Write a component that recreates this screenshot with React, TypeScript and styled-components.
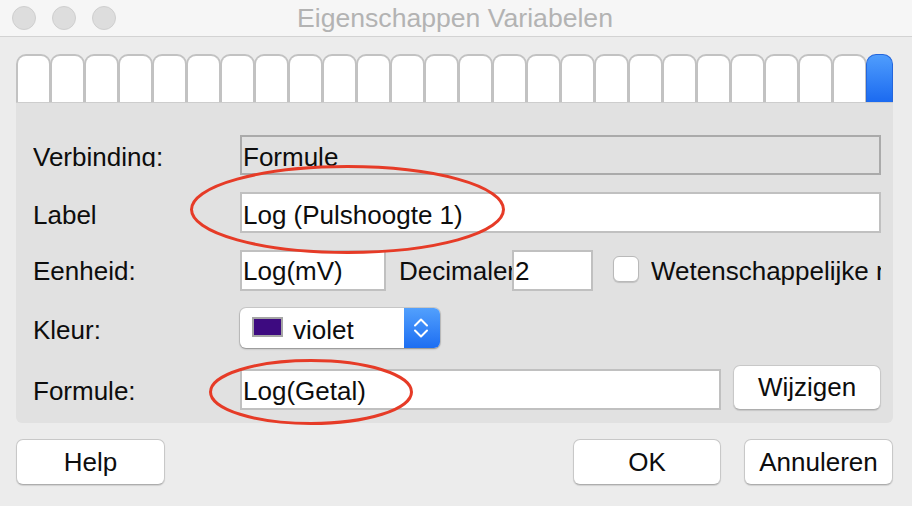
import React from "react";
import styled, { createGlobalStyle } from "styled-components";

const GlobalStyle = createGlobalStyle`
  html, body {
    margin: 0;
    padding: 0;
  }
  body {
    background: #ececec;
    font-family: "Liberation Sans", Arial, Helvetica, sans-serif;
  }
`

const Window = styled.div`
  position: relative;
  width: 912px;
  height: 506px;
  overflow: hidden;
  background: #ececec;
  color: #0d0d0d;
  font-size: 26px;
`

const TitleBar = styled.div`
  display: grid;
  grid-template-columns: 1fr auto 1fr;
  align-items: center;
  height: 36px;
  padding-left: 12px;
  background: #f6f6f6;
  border-bottom: 1px solid #d3d3d3;
`

const Lights = styled.div`
  display: flex;
  gap: 16px;
`

const Light = styled.span`
  width: 24px;
  height: 24px;
  box-sizing: border-box;
  border-radius: 50%;
  background: #dddddd;
  border: 1px solid #cfcfcf;
`

const Title = styled.div`
  font-size: 26.6px;
  line-height: 36px;
  color: #b3b3b3;
  margin-left: -14px;
`

const TabStrip = styled.div`
  display: flex;
  height: 48px;
  margin: 17px 19px 0 16px;
`

const Tab = styled.div<{ $active?: boolean }>`
  box-sizing: border-box;
  flex: none;
  width: ${({$active}) => $active ? "27px" : "35px"};
  margin-right: -1px;
  border-radius: 10px 10px 0 0;
  ${({$active}) => $active ? `
    background: linear-gradient(#4f9dfd, #1b6af0);
    border: 1px solid #2466dc;
    border-bottom: none;
  ` : `
    background: #fff;
    border: 2px solid #c2c2c2;
    border-bottom: none;
  `}
`

const Panel = styled.div`
  display: flex;
  flex-direction: column;
  gap: 17px;
  margin: 0 19px 0 16px;
  padding: 32px 12px 13px 17px;
  background: #e1e1e1;
  border-top: 1px solid #cdcdcd;
  border-radius: 0 0 6px 6px;
`

const Row = styled.div<{ $h: number; $pt: number; $end?: boolean }>`
  --pt: ${({$pt}) => $pt}px;
  display: flex;
  align-items: ${({$end}) => $end ? "flex-end" : "flex-start"};
  height: ${({$h}) => $h}px;
`

const FieldLabel = styled.div`
  flex: none;
  box-sizing: border-box;
  width: 207px;
  height: 41px;
  padding-top: calc(var(--pt) + 2px);
  line-height: 28px;
  white-space: nowrap;
`

const Clip = styled.span`
  display: block;
  height: 24px;
  overflow: hidden;
`

const Field = styled.div<{ $w?: number; $disabled?: boolean }>`
  box-sizing: border-box;
  ${({$w}) => $w ? `width: ${$w}px; flex: none;` : "flex: 1;"}
  height: 41px;
  padding: var(--pt) 0 0 1px;
  line-height: 28px;
  white-space: nowrap;
  overflow: hidden;
  background: ${({$disabled}) => $disabled ? "#e1e1e1" : "#fff"};
  border: 2px solid ${({$disabled}) => $disabled ? "#aaaaaa" : "#c0c0c0"};
`

const InlineLabel = styled.div`
  flex: none;
  box-sizing: border-box;
  width: 113px;
  margin-left: 13px;
  padding-top: calc(var(--pt) + 2px);
  line-height: 28px;
  white-space: nowrap;
  overflow: hidden;
`

const CheckBox = styled.span`
  flex: none;
  box-sizing: border-box;
  width: 26px;
  height: 26px;
  margin: 6px 0 0 20px;
  border-radius: 6px;
  background: #fff;
  border: 1px solid #b9b9b9;
  box-shadow: 0 1px 1px rgba(0, 0, 0, 0.15);
`

const CheckText = styled.div`
  flex: 1;
  min-width: 0;
  margin-left: 12px;
  padding-top: calc(var(--pt) + 2px);
  line-height: 28px;
  white-space: nowrap;
  overflow: hidden;
`

const Select = styled.div`
  display: flex;
  width: 200px;
  height: 40px;
  border-radius: 6px;
  background: #fff;
  box-shadow: 0 0 0 1px rgba(0, 0, 0, 0.1), 0 1px 2px rgba(0, 0, 0, 0.3);
`

const SelectValue = styled.div`
  flex: 1;
  display: flex;
  align-items: flex-start;
  padding-left: 12px;
`

const Swatch = styled.span<{ $color: string }>`
  flex: none;
  box-sizing: border-box;
  width: 31px;
  height: 20px;
  margin-top: 9px;
  background: ${({$color}) => $color};
  border: 2px solid #a5a5a5;
`

const SelectText = styled.span`
  margin-left: 10px;
  padding-top: calc(var(--pt) + 2px);
  line-height: 28px;
`

const SelectArrow = styled.div`
  display: flex;
  width: 36px;
  border-radius: 0 6px 6px 0;
  background: linear-gradient(#52a0fd, #1d6ef2);
`

const Button = styled.button<{ $w: number; $h: number }>`
  flex: none;
  width: ${({$w}) => $w}px;
  height: ${({$h}) => $h}px;
  padding: 0;
  font-family: inherit;
  font-size: 26px;
  color: #0d0d0d;
  background: #fff;
  border: 1px solid #c8c8c8;
  border-bottom-color: #adadad;
  border-radius: 7px;
  box-shadow: 0 1px 1px rgba(0, 0, 0, 0.12);
`

const SideButton = styled(Button)`
  margin-left: 12px;
`

const Footer = styled.div`
  display: flex;
  justify-content: space-between;
  padding: 16px 19px 0 16px;
`

const FooterGroup = styled.div`
  display: flex;
  gap: 23px;
`

const Overlay = styled.svg`
  position: absolute;
  left: 0;
  top: 0;
  pointer-events: none;
`

function App() {
    const tabs = Array.from({length: 25}, (_, i) => i)
    return (
        <>
            <GlobalStyle/>
            <Window>
                <TitleBar>
                    <Lights>
                        <Light/>
                        <Light/>
                        <Light/>
                    </Lights>
                    <Title>Eigenschappen Variabelen</Title>
                    <span/>
                </TitleBar>

                <TabStrip>
                    {tabs.map(i => <Tab key={i}/>)}
                    <Tab $active/>
                </TabStrip>

                <Panel>
                    <Row $h={40} $pt={6}>
                        <FieldLabel><Clip>Verbinding:</Clip></FieldLabel>
                        <Field $disabled style={{height: 40}}><Clip>Formule</Clip></Field>
                    </Row>
                    <Row $h={41} $pt={7}>
                        <FieldLabel>Label</FieldLabel>
                        <Field>Log (Pulshoogte 1)</Field>
                    </Row>
                    <Row $h={41} $pt={5}>
                        <FieldLabel>Eenheid:</FieldLabel>
                        <Field $w={146}>Log(mV)</Field>
                        <InlineLabel>Decimalen</InlineLabel>
                        <Field $w={81}>2</Field>
                        <CheckBox/>
                        <CheckText>Wetenschappelijke notatie</CheckText>
                    </Row>
                    <Row $h={40} $pt={6}>
                        <FieldLabel>Kleur:</FieldLabel>
                        <Select>
                            <SelectValue>
                                <Swatch $color="#3d0a80"/>
                                <SelectText>violet</SelectText>
                            </SelectValue>
                            <SelectArrow>
                                <svg width="36" height="40" viewBox="0 0 36 40">
                                    <polyline points="11,17.5 17,11.5 23,17.5" fill="none" stroke="#fff"
                                              strokeWidth="2" strokeLinecap="round" strokeLinejoin="round"/>
                                    <polyline points="11,22.5 17,28.5 23,22.5" fill="none" stroke="#fff"
                                              strokeWidth="2" strokeLinecap="round" strokeLinejoin="round"/>
                                </svg>
                            </SelectArrow>
                        </Select>
                    </Row>
                    <Row $h={45} $pt={6} $end>
                        <FieldLabel>Formule:</FieldLabel>
                        <Field $w={481}>Log(Getal)</Field>
                        <SideButton $w={148} $h={45}>Wijzigen</SideButton>
                    </Row>
                </Panel>

                <Footer>
                    <Button $w={149} $h={46}>Help</Button>
                    <FooterGroup>
                        <Button $w={148} $h={46}>OK</Button>
                        <Button $w={149} $h={46}>Annuleren</Button>
                    </FooterGroup>
                </Footer>

                <Overlay width="912" height="506" viewBox="0 0 912 506">
                    <ellipse cx="347.5" cy="209.5" rx="156" ry="43" fill="none" stroke="#e63b27" strokeWidth="3"/>
                    <ellipse cx="311" cy="392" rx="100.5" ry="31.5" fill="none" stroke="#e63b27" strokeWidth="3"/>
                </Overlay>
            </Window>
        </>
    )
}

export default App;
